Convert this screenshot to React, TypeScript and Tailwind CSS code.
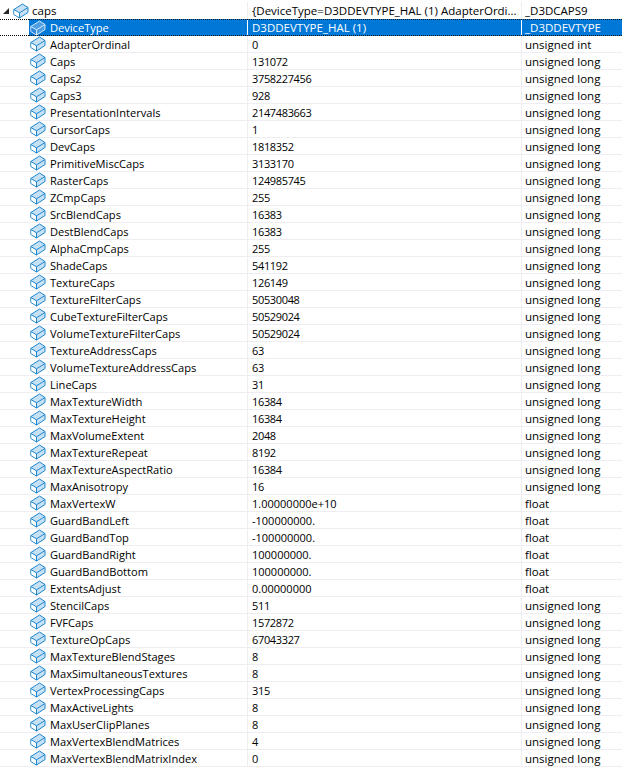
import React from "react";

const ROWS: [string, string, string][] = [
  ["AdapterOrdinal", "0", "unsigned int"],
  ["Caps", "131072", "unsigned long"],
  ["Caps2", "3758227456", "unsigned long"],
  ["Caps3", "928", "unsigned long"],
  ["PresentationIntervals", "2147483663", "unsigned long"],
  ["CursorCaps", "1", "unsigned long"],
  ["DevCaps", "1818352", "unsigned long"],
  ["PrimitiveMiscCaps", "3133170", "unsigned long"],
  ["RasterCaps", "124985745", "unsigned long"],
  ["ZCmpCaps", "255", "unsigned long"],
  ["SrcBlendCaps", "16383", "unsigned long"],
  ["DestBlendCaps", "16383", "unsigned long"],
  ["AlphaCmpCaps", "255", "unsigned long"],
  ["ShadeCaps", "541192", "unsigned long"],
  ["TextureCaps", "126149", "unsigned long"],
  ["TextureFilterCaps", "50530048", "unsigned long"],
  ["CubeTextureFilterCaps", "50529024", "unsigned long"],
  ["VolumeTextureFilterCaps", "50529024", "unsigned long"],
  ["TextureAddressCaps", "63", "unsigned long"],
  ["VolumeTextureAddressCaps", "63", "unsigned long"],
  ["LineCaps", "31", "unsigned long"],
  ["MaxTextureWidth", "16384", "unsigned long"],
  ["MaxTextureHeight", "16384", "unsigned long"],
  ["MaxVolumeExtent", "2048", "unsigned long"],
  ["MaxTextureRepeat", "8192", "unsigned long"],
  ["MaxTextureAspectRatio", "16384", "unsigned long"],
  ["MaxAnisotropy", "16", "unsigned long"],
  ["MaxVertexW", "1.00000000e+10", "float"],
  ["GuardBandLeft", "-100000000.", "float"],
  ["GuardBandTop", "-100000000.", "float"],
  ["GuardBandRight", "100000000.", "float"],
  ["GuardBandBottom", "100000000.", "float"],
  ["ExtentsAdjust", "0.00000000", "float"],
  ["StencilCaps", "511", "unsigned long"],
  ["FVFCaps", "1572872", "unsigned long"],
  ["TextureOpCaps", "67043327", "unsigned long"],
  ["MaxTextureBlendStages", "8", "unsigned long"],
  ["MaxSimultaneousTextures", "8", "unsigned long"],
  ["VertexProcessingCaps", "315", "unsigned long"],
  ["MaxActiveLights", "8", "unsigned long"],
  ["MaxUserClipPlanes", "8", "unsigned long"],
  ["MaxVertexBlendMatrices", "4", "unsigned long"],
  ["MaxVertexBlendMatrixIndex", "0", "unsigned long"],
];

// the blue "field" box from the VS watch window
function FieldIcon({ selected }: { selected?: boolean }) {
  const stroke = selected ? "#d6e9f8" : "#1f86cc";
  const top = selected ? "#4f9fe2" : "#c6e1f6";
  const front = selected ? "#2f8ade" : "#ffffff";
  return (
    <svg width="16" height="16" viewBox="0 0 16 16" className="shrink-0">
      <path d="M0.8 6.5 L9.5 1 L15 4.5 L15 9.5 L6.5 15 L0.8 11.5 Z" fill={top} stroke={stroke} strokeWidth="1" strokeLinejoin="round" />
      <path d="M1.4 7 L6 9.8 L6 14 L1.4 11.2 Z" fill={front} />
      <path d="M0.8 6.5 L6.5 9.8 L15 4.5 M6.5 9.8 L6.5 15" fill="none" stroke={stroke} strokeWidth="1" strokeLinejoin="round" />
    </svg>
  );
}

function Row({ name, value, type }: { name: string; value: string; type: string }) {
  return (
    <div className="flex h-[17px] border-b border-[#eeeef2] text-black">
      <div className="flex w-[248px] shrink-0 items-center gap-[4px] pl-[30px] border-r border-[#eeeef2]">
        <FieldIcon />
        <span className="mt-[2px] whitespace-nowrap text-[11.1px] leading-[18px]">{name}</span>
      </div>
      <div
        className={`w-[274px] shrink-0 pl-[4px] text-[11px] leading-[18px] border-r border-[#eeeef2] whitespace-nowrap ${
          type === "float" ? "" : "tracking-[-0.35px]"
        }`}
      >
        {value}
      </div>
      <div className="flex-1 pl-[3px] text-[11.5px] leading-[18px] whitespace-nowrap">{type}</div>
    </div>
  );
}

export default function App() {
  return (
    <div className="h-[769px] w-[622px] overflow-hidden bg-white font-['Open_Sans','Liberation_Sans',sans-serif]">
      <div className="h-[2px]" />
      {/* caps header row */}
      <div className="flex h-[17px] text-black">
        <div className="flex w-[248px] shrink-0 items-center gap-[4px] pl-[2px] border-r border-[#eeeef2]">
          <svg width="8" height="8" viewBox="0 0 8 8" className="shrink-0">
            <path d="M7 1 L7 7 L1 7 Z" fill="#262626" />
          </svg>
          <span className="-ml-[1px] flex items-center gap-[3px]">
            <FieldIcon />
            <span className="text-[11.5px] leading-[18px]">caps</span>
          </span>
        </div>
        <div className="w-[274px] shrink-0 pl-[4px] text-[11.5px] leading-[18px] border-r border-[#eeeef2] whitespace-nowrap">
          {"{DeviceType=D3DDEVTYPE_HAL (1) AdapterOrdi..."}
        </div>
        <div className="flex-1 pl-[3px] text-[11.5px] leading-[18px]">_D3DCAPS9</div>
      </div>
      {/* selected row, focus dots run the whole width */}
      <div className="flex h-[17px] text-white">
        <div className="w-[29px] shrink-0 border-y border-dotted border-y-black" />
        <div className="flex flex-1 bg-[#0078d7] border-y border-dotted border-y-[#1a1a1a]">
          <div className="flex w-[219px] shrink-0 items-center pl-[1px] gap-[4px] border-r border-white">
            <FieldIcon selected />
            <span className="text-[11.1px] leading-[17px]">DeviceType</span>
          </div>
          <div className="w-[274px] shrink-0 pl-[4px] text-[11.5px] leading-[16px] border-r border-white">D3DDEVTYPE_HAL (1)</div>
          <div className="flex-1 pl-[3px] text-[11.5px] leading-[16px]">_D3DDEVTYPE</div>
        </div>
      </div>
      {ROWS.map((r) => (
        <Row key={r[0]} name={r[0]} value={r[1]} type={r[2]} />
      ))}
    </div>
  );
}
